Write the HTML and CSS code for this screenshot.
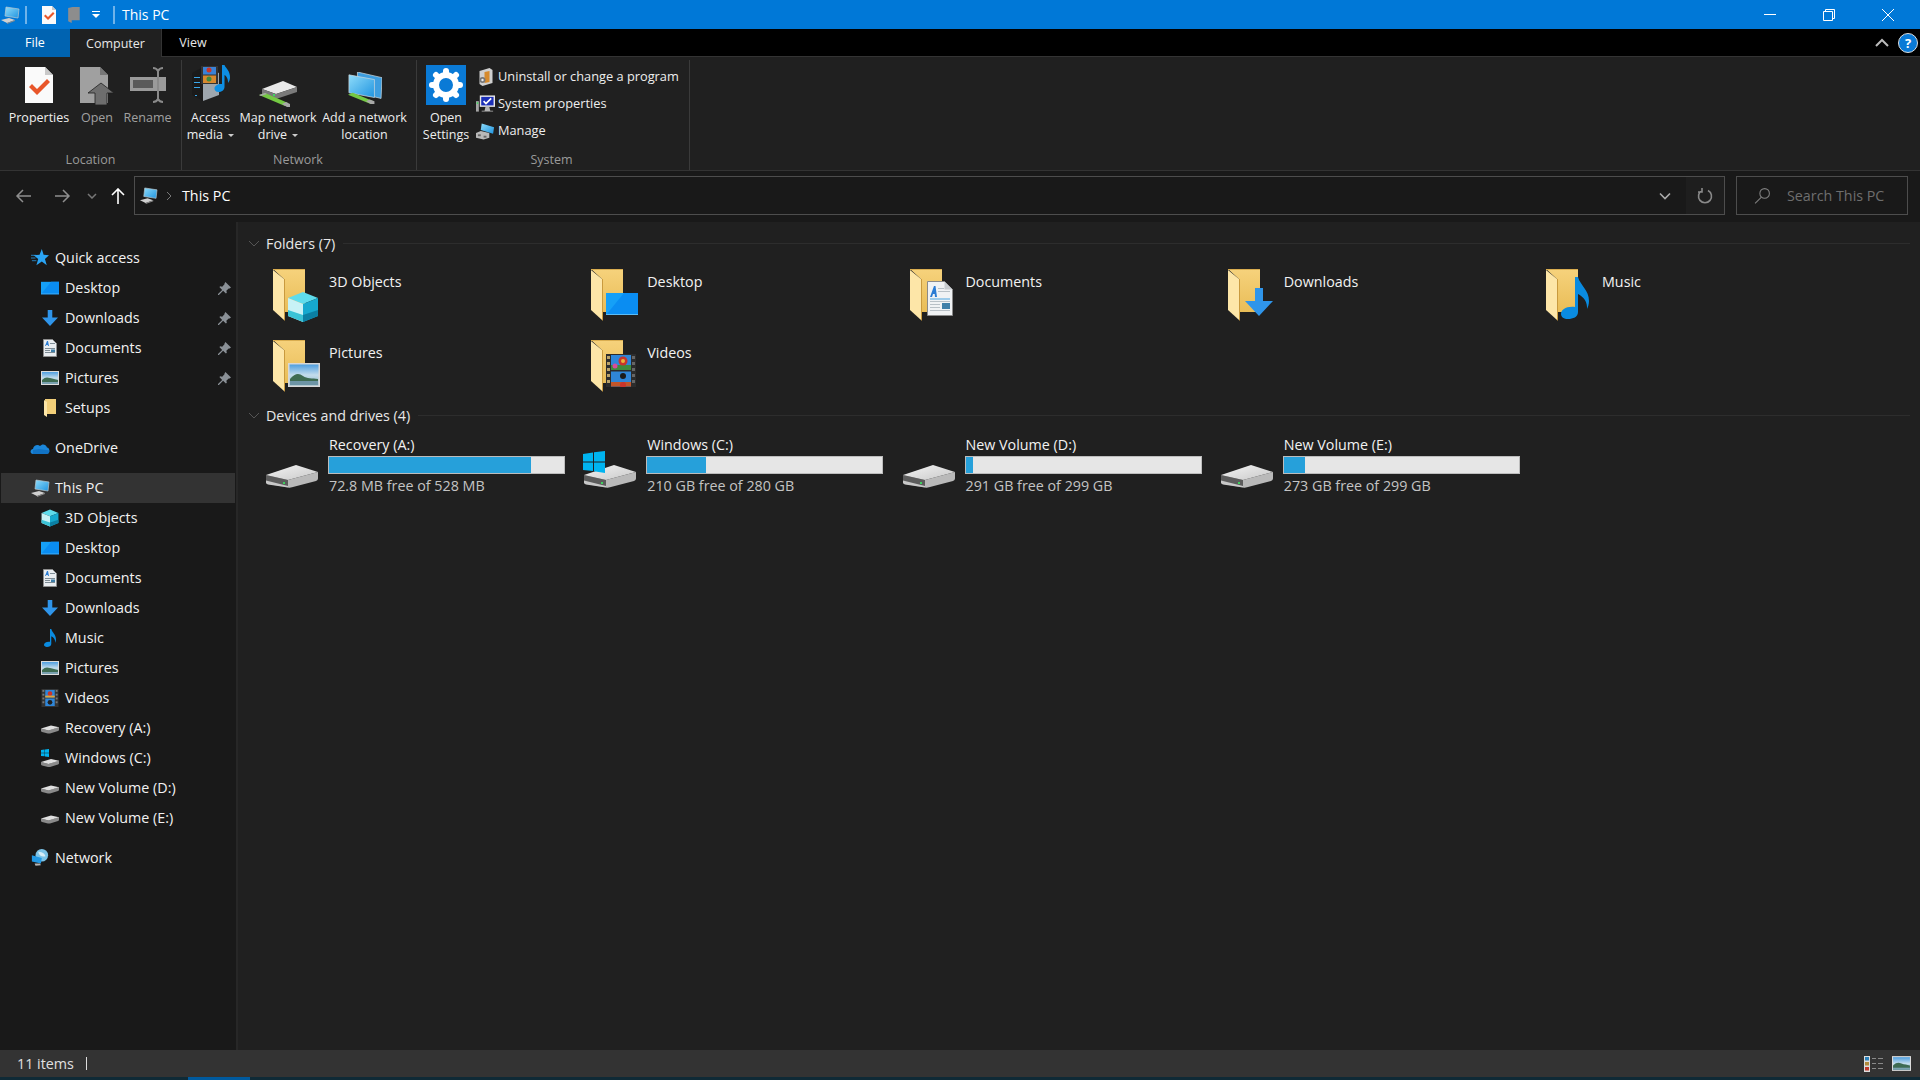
FILE: index.html
```html
<!DOCTYPE html>
<html lang="en">
<head>
<meta charset="utf-8">
<title>This PC</title>
<link rel="stylesheet" href="styles.css">
</head>
<body>
<svg class="sprite" xmlns="http://www.w3.org/2000/svg">
  <defs>
    <linearGradient id="gFolder" x1="0" y1="0" x2="0" y2="1"><stop offset="0" stop-color="#f6d27c"/><stop offset="1" stop-color="#e9bd57"/></linearGradient>
    <linearGradient id="gHdd" x1="0" y1="0" x2="1" y2="1"><stop offset="0" stop-color="#f4f4f4"/><stop offset="1" stop-color="#c8c8c8"/></linearGradient>
    <linearGradient id="gSky" x1="0" y1="0" x2="0" y2="1"><stop offset="0" stop-color="#4f9fe0"/><stop offset=".5" stop-color="#c3dcec"/><stop offset="1" stop-color="#8fb8c8"/></linearGradient>
    <linearGradient id="gScreen" x1="0" y1="0" x2="1" y2="1"><stop offset="0" stop-color="#8fdcfa"/><stop offset="1" stop-color="#1f94e0"/></linearGradient>
  </defs>

  <symbol id="folder" viewBox="0 0 52 54">
    <polygon points="1,1 33,1 33,44 12,44 12,11" fill="url(#gFolder)"/>
    <rect x="1" y="1" width="32" height="1" fill="#d9ad50"/>
    <polygon points="1,2 12,11 12,52 1,42" fill="#fde6a8"/>
    <polygon points="12,11 13,11 13,53 12,52" fill="#c99a3e"/>
  </symbol>

  <symbol id="cube" viewBox="0 0 32 32">
    <polygon points="16,1 31,7 16,13 1,7" fill="#5fdcec"/>
    <polygon points="1,7 16,13 16,31 1,25" fill="#c8f2f6"/>
    <polygon points="31,7 16,13 16,31 31,25" fill="#16a9cf"/>
    <polygon points="1,19 16,24 16,31 1,25" fill="#3bc3d6"/>
    <polygon points="31,19 16,24 16,31 31,25" fill="#0b7fa3"/>
  </symbol>
  <symbol id="desk" viewBox="0 0 32 22">
    <rect width="32" height="22" fill="#15a0f7"/>
    <polygon points="0,22 18,0 32,0 32,22" fill="#0a8df2"/>
    <rect y="21" width="32" height="1" fill="#5bbcf7"/>
  </symbol>
  <symbol id="pic" viewBox="0 0 32 24">
    <rect width="32" height="24" fill="#d8d8d8"/>
    <rect x="1.5" y="1.5" width="29" height="21" fill="url(#gSky)"/>
    <path d="M2 16c5-6 9-6 13-3s9 2 15 3v2H2z" fill="#3e6b52"/>
    <rect x="2" y="18" width="28" height="4" fill="#6d95a6"/>
  </symbol>
  <symbol id="film" viewBox="0 0 30 33">
    <rect width="30" height="33" fill="#2c2c2c"/>
    <g fill="#b9a26a"><rect x="1" y="2" width="3" height="3"/><rect x="1" y="8" width="3" height="3"/><rect x="1" y="14" width="3" height="3"/><rect x="1" y="20" width="3" height="3"/><rect x="1" y="26" width="3" height="3"/></g>
    <g fill="#666"><rect x="26" y="2" width="3" height="3"/><rect x="26" y="8" width="3" height="3"/><rect x="26" y="14" width="3" height="3"/><rect x="26" y="20" width="3" height="3"/><rect x="26" y="26" width="3" height="3"/></g>
    <rect x="5" y="1" width="20" height="15" fill="#2f86d8"/>
    <rect x="5" y="17.5" width="20" height="15" fill="#2f86d8"/>
    <rect x="5" y="11" width="20" height="5" fill="#3f8a3c"/>
    <rect x="5" y="28" width="20" height="4.5" fill="#c2562a"/>
    <circle cx="17" cy="7" r="4.5" fill="#c9352b"/><circle cx="17" cy="7" r="2" fill="#e9b53a"/>
    <circle cx="9" cy="12" r="2.5" fill="#d84a9a"/>
    <circle cx="17" cy="22" r="3" fill="#1b1b1b"/><circle cx="17" cy="31" r="3" fill="#c9352b"/>
  </symbol>
  <symbol id="doc" viewBox="0 0 26 35">
    <path d="M.5.5h17l8 8v26H.5z" fill="#f0f2f4" stroke="#8a8a8a"/>
    <path d="M17.5.5v8h8z" fill="#c8ccd0"/>
    <path d="M3 16l4-11h1.5l1.5 11h-2l-.3-3H6l-1 3z" fill="#2b7cd3"/>
    <g fill="#b8c0c6"><rect x="3" y="20" width="20" height="1"/><rect x="3" y="23" width="10" height="1"/><rect x="3" y="26" width="10" height="1"/><rect x="3" y="29" width="20" height="1"/><rect x="11" y="7" width="6" height="1"/><rect x="11" y="10" width="12" height="1"/></g>
    <rect x="3" y="17.5" width="20" height="1" fill="#4aa3df"/>
    <rect x="15" y="22" width="8" height="6" fill="#3f7fa8"/>
  </symbol>
  <symbol id="down" viewBox="0 0 28 28">
    <polygon points="10,0 18,0 18,13 28,13 14,28 0,13 10,13" fill="#2f95ea"/>
  </symbol>
  <symbol id="note" viewBox="0 0 28 42">
    <path d="M14 0h3c2 8 11 13 11 24 0 3-1 6-2 8 .5-7-3-12-9-15v18c0 5-5 7-10 7-4 0-7-2-7-5 0-4 5-8 14-7z" fill="#0a8be0"/>
  </symbol>

  <symbol id="hdd" viewBox="0 0 56 40">
    <path d="M2 26v7q0 1.500 2 2L24 38.500V31z" fill="#5c5c5c"/>
    <path d="M24 31v7.500q2 .5 4-.2L52 32q2-.8 2-2.500V23z" fill="#b9b9b9"/>
    <path d="M2 31.500 24 37v1.500L4 35.500q-2-.5-2-2z" fill="#c8c8c8"/>
    <polygon points="2,26 32,16 54,23 24,31" fill="url(#gHdd)"/>
    <rect x="19" y="33" width="2" height="2" fill="#3ecf5e"/>
  </symbol>
  <symbol id="win" viewBox="0 0 22 22">
    <polygon points="0,3 10,1.5 10,10.5 0,10.5" fill="#00b4f0"/>
    <polygon points="11,1.3 22,0 22,10.5 11,10.5" fill="#00b4f0"/>
    <polygon points="0,11.5 10,11.5 10,20 0,19" fill="#00b4f0"/>
    <polygon points="11,11.5 22,11.5 22,22 11,20.3" fill="#00b4f0"/>
  </symbol>

  <symbol id="pc" viewBox="0 0 20 18">
    <polygon points="6,1 19,3 18,12 5,10" fill="url(#gScreen)" stroke="#b9c7cf" stroke-width=".7"/>
    <polygon points="1,14 9,12 15,14 7,17" fill="#d0d0d0"/>
    <polygon points="7,17 15,14 15,15 7,18" fill="#8a8a8a"/>
  </symbol>
  <symbol id="s-doc" viewBox="0 0 18 18">
    <path d="M2.5.5h9l4 4v13h-13z" fill="#e9edf0" stroke="#8e8e8e"/>
    <path d="M4 7l2-5h1l1 5H7l-.2-1H5.3L5 7z" fill="#2b7cd3"/>
    <g fill="#7d8b94"><rect x="4" y="9" width="10" height="1"/><rect x="4" y="11" width="5" height="1"/><rect x="4" y="13" width="10" height="1"/><rect x="9" y="4" width="5" height="1"/></g>
    <rect x="10" y="10.5" width="4" height="2.5" fill="#3f7fa8"/>
  </symbol>
  <symbol id="s-pic" viewBox="0 0 18 14">
    <rect width="18" height="14" fill="#dcdcdc"/>
    <rect x="1" y="1" width="16" height="12" fill="url(#gSky)"/>
    <path d="M1 9c3-3 5-3 8-2s5 1 8 2v4H1z" fill="#3e6b52"/>
    <rect x="1" y="11" width="16" height="2" fill="#7aa1b0"/>
  </symbol>
  <symbol id="s-film" viewBox="0 0 18 19">
    <rect width="18" height="19" fill="#333"/>
    <g fill="#777"><rect x="1" y="1" width="2" height="2"/><rect x="1" y="5" width="2" height="2"/><rect x="1" y="9" width="2" height="2"/><rect x="1" y="13" width="2" height="2"/><rect x="15" y="1" width="2" height="2"/><rect x="15" y="5" width="2" height="2"/><rect x="15" y="9" width="2" height="2"/><rect x="15" y="13" width="2" height="2"/></g>
    <rect x="4" y="1" width="10" height="8" fill="#2f86d8"/><rect x="4" y="10" width="10" height="8" fill="#2f86d8"/>
    <circle cx="9" cy="5" r="2.5" fill="#c9352b"/><circle cx="9" cy="14" r="2.5" fill="#1f1f1f"/><rect x="4" y="7" width="10" height="2" fill="#e1a53a"/>
  </symbol>
  <symbol id="s-hdd" viewBox="0 0 18 11">
    <path d="M0 6v2.500q0 .6 1 1l6 1.500q1 .2 2 0l8-2.500q1-.3 1-1V4.500L7.500 8z" fill="#8a8a8a"/>
    <polygon points="0,6 10,3 18,4.7 7.500,8" fill="#e0e0e0"/>
  </symbol>
  <symbol id="s-folder" viewBox="0 0 14 18">
    <polygon points="2,0 13,0 13,15 4,15 2,1" fill="#f2cf79"/>
    <polygon points="1,1 4,3 4,18 1,16" fill="#fde6a8"/>
  </symbol>
  <symbol id="star" viewBox="0 0 20 20">
    <polygon points="12,0 14,6.5 20,7 15.5,11 17.5,18 12,14 6,18 8,11 3,7 9.5,6.5" fill="#2aa4f4"/>
    <g stroke="#2aa4f4" stroke-width=".8"><line x1="0" y1="7" x2="6" y2="7"/><line x1="0" y1="10" x2="5" y2="10"/><line x1="1" y1="13" x2="6" y2="13"/></g>
  </symbol>
  <symbol id="cloud" viewBox="0 0 20 14">
    <path d="M3 13C0 13-.5 8.500 3 8c.5-4 5-5 7-3 2-2.500 6-2 7 1.500 3 0 3.500 6.500-.5 6.500z" fill="#1b86d9"/>
    <path d="M3 13h14c2 0 2.500-2 2.500-3.500L9 8 3 9z" fill="#0f6cbd" opacity=".75"/>
  </symbol>
  <symbol id="net" viewBox="0 0 20 20">
    <circle cx="12" cy="7" r="7" fill="#7cc4e8"/>
    <path d="M8 3c3 0 7 1 8 5-3 1-7 0-8-5z" fill="#d7eef8"/>
    <polygon points="1,7 12,10 11,16 1,14" fill="#2299e4"/>
    <polygon points="4,16 10,16 11,18 5,18.5" fill="#b5b5b5"/>
  </symbol>
  <symbol id="pin" viewBox="0 0 14 14">
    <path d="M8 0l6 6-1.500 1-1 0-2.500 2.500.5 2-1 1-3-3L1 14l-1 0 0-1 4.500-4.500-3-3 1-1 2 .5L7 2.500V1.500z" fill="#8a9096"/>
  </symbol>

  <symbol id="r-prop" viewBox="0 0 28 36">
    <path d="M0 0h20l8 8v28H0z" fill="#fafafa"/>
    <path d="M20 0l8 8h-8z" fill="#c9c9c9"/>
    <path d="M4 20l3-3 5 5 10-10 3 3-13 13z" fill="#e8562a"/>
  </symbol>
  <symbol id="r-open" viewBox="0 0 34 38">
    <path d="M0 0h20l8 8v28H0z" fill="#a0a0a0"/>
    <path d="M20 0l8 8h-8z" fill="#777"/>
    <path d="M8 26L21 16l13 10h-7v12H15V26z" fill="#6e6e6e" stroke="#202020" stroke-width=".8"/>
  </symbol>
  <symbol id="r-rename" viewBox="0 0 36 36">
    <rect y="10" width="36" height="14" fill="#9a9a9a"/>
    <rect x="3" y="13" width="20" height="8" fill="#5a5a5a"/>
    <path d="M23 1c3 0 4 1 5 3 1-2 2-3 5-3M23 35c3 0 4-1 5-3 1 2 2 3 5 3M28 4v28" stroke="#8a8a8a" stroke-width="2" fill="none"/>
  </symbol>
  <symbol id="r-media" viewBox="0 0 40 38">
    <polygon points="1,8 12,2 12,36 1,30" fill="#1a1a1a"/>
    <polygon points="12,2 28,8 28,30 12,36" fill="#9ea6ad"/>
    <g fill="#39a7ea"><rect x="3" y="12" width="6" height="1"/><rect x="3" y="17" width="6" height="1"/><rect x="3" y="22" width="6" height="1"/><rect x="4" y="30" width="2" height="1"/></g>
    <rect x="10" y="1" width="17" height="18" fill="#333"/>
    <rect x="12" y="2" width="13" height="7.5" fill="#3a82d6"/><rect x="12" y="10.5" width="13" height="7.5" fill="#d8892e"/>
    <circle cx="18" cy="5" r="2.5" fill="#c9352b"/><circle cx="18" cy="14" r="2.5" fill="#3f8a3c"/>
    <path d="M31 0h2.500c1 3 6 6 5.500 13-.2 2-1 4-2 5 .3-4-1.500-7-3.500-8v12c0 3-3 5-6 5s-4-2-4-3.500c0-3 4-5 7.500-4.500z" fill="#0e8fe3"/>
  </symbol>
  <symbol id="r-map" viewBox="0 0 40 30">
    <polygon points="4,11 25,3 39,9 18,16" fill="#e8e8e8"/>
    <path d="M4 11v5l14 5 21-7V9l-21 7z" fill="#7a7a7a"/>
    <rect x="15" y="16" width="2" height="2" fill="#42d264"/>
    <path d="M1 17l6-2 23 10-3 3z" fill="#74c943"/>
    <path d="M1 17l6-2 2 1-6 2zM24 26l4-2 4 2v3h-3z" fill="#a8a8a8"/>
  </symbol>
  <symbol id="r-add" viewBox="0 0 36 36">
    <polygon points="10,0 36,6 35,28 10,22" fill="#3d9ee0" stroke="#c5d5dc" stroke-width=".8"/>
    <polygon points="1,3 28,8 28,27 1,22" fill="url(#gScreen)" stroke="#c5d5dc" stroke-width=".8"/>
    <path d="M0 24l5-2 22 9-3 3z" fill="#74c943"/>
    <path d="M19 31l4-2 5 2v3h-4z" fill="#a8a8a8"/>
  </symbol>
  <symbol id="r-gear" viewBox="0 0 40 40">
    <rect width="40" height="40" fill="#0a7ad6"/>
    <circle cx="20" cy="20" r="10" fill="none" stroke="#fff" stroke-width="6"/>
    <g stroke="#fff" stroke-width="6" stroke-linecap="round"><line x1="20" y1="6" x2="20" y2="9"/><line x1="20" y1="31" x2="20" y2="34"/><line x1="6" y1="20" x2="9" y2="20"/><line x1="31" y1="20" x2="34" y2="20"/><line x1="10" y1="10" x2="12" y2="12"/><line x1="28" y1="28" x2="30" y2="30"/><line x1="30" y1="10" x2="28" y2="12"/><line x1="12" y1="28" x2="10" y2="30"/></g>
  </symbol>
  <symbol id="r-uninst" viewBox="0 0 18 18">
    <polygon points="3,3 13,0 16,2 16,15 6,18 3,16" fill="#cfcfcf"/>
    <polygon points="8,4 13,3 13,14 8,15" fill="#d68a2c"/>
    <circle cx="6" cy="12" r="3" fill="#777"/><circle cx="6" cy="12" r="1.2" fill="#eee"/>
  </symbol>
  <symbol id="r-sys" viewBox="0 0 20 18">
    <rect x="4" y="0" width="16" height="12" fill="#e8e8e8"/>
    <rect x="5.5" y="1.5" width="13" height="9" fill="#1b2fb8"/>
    <path d="M8 6l2.500 2.500L16 3" stroke="#fff" stroke-width="1.8" fill="none"/>
    <path d="M10 12h4l1 4h3v1H6v-1h3z" fill="#b5b5b5"/>
    <rect x="0" y="6" width="3" height="11" fill="#a5a5a5"/><rect x=".8" y="7" width="1.5" height="2" fill="#45d664"/>
  </symbol>
  <symbol id="r-manage" viewBox="0 0 20 18">
    <polygon points="6,1 19,5 18,12 5,8" fill="url(#gScreen)"/>
    <polygon points="0,11 5,9 14,11 14,16 8,18 0,16" fill="#b9b9b9"/>
    <rect x="2" y="12.5" width="3" height="2" fill="#666"/>
    <rect x="8" y="14" width="3" height="2" fill="#666"/>
  </symbol>
</svg>

<header class="titlebar">
  <svg class="tb-pc"><use href="#pc"/></svg>
  <i class="tb-sep"></i>
  <svg class="tb-check" viewBox="0 0 28 36"><use href="#r-prop" width="28" height="36"/></svg>
  <svg class="tb-fold" viewBox="0 0 14 18"><polygon points="1,1 6,0 14,0 14,15 5,15 5,18 1,16" fill="#8d8d8d"/></svg>
  <svg class="tb-more" viewBox="0 0 10 10"><rect x="1" y="1" width="8" height="1" fill="#fff"/><polygon points="1,4 9,4 5,8" fill="#fff"/></svg>
  <i class="tb-sep tb-sep2"></i>
  <span class="tb-title">This PC</span>
  <div class="win-ctrl">
    <svg viewBox="0 0 14 14"><rect x="1" y="6" width="12" height="1" fill="#fff"/></svg>
    <svg viewBox="0 0 14 14"><path d="M3.5 3.5V1.5h9v9h-2M1.5 3.5h9v9h-9z" fill="none" stroke="#fff"/></svg>
    <svg viewBox="0 0 14 14"><path d="M1 1l12 12M13 1L1 13" stroke="#fff" fill="none"/></svg>
  </div>
</header>

<nav class="tabs">
  <span class="tab tab-file">File</span>
  <span class="tab tab-active">Computer</span>
  <span class="tab tab-view">View</span>
  <svg class="tab-collapse" viewBox="0 0 14 9"><path d="M1 8l6-6 6 6" fill="none" stroke="#bbb" stroke-width="2"/></svg>
  <span class="help">?</span>
</nav>

<section class="ribbon">
  <div class="rgroup rg-location">
    <div class="rbody">
      <div class="rbtn w-prop"><svg class="ri ri-prop"><use href="#r-prop"/></svg><span>Properties</span></div>
      <div class="rbtn w-open dim"><svg class="ri ri-open"><use href="#r-open"/></svg><span>Open</span></div>
      <div class="rbtn w-ren dim"><svg class="ri ri-ren"><use href="#r-rename"/></svg><span>Rename</span></div>
    </div>
    <div class="rlabel">Location</div>
  </div>
  <div class="rgroup rg-network">
    <div class="rbody">
      <div class="rbtn w-media"><svg class="ri ri-media"><use href="#r-media"/></svg><span>Access<br>media <b class="caret"></b></span></div>
      <div class="rbtn w-map"><svg class="ri ri-map"><use href="#r-map"/></svg><span>Map network<br>drive <b class="caret"></b></span></div>
      <div class="rbtn w-add"><svg class="ri ri-add"><use href="#r-add"/></svg><span>Add a network<br>location</span></div>
    </div>
    <div class="rlabel rl-net">Network</div>
  </div>
  <div class="rgroup rg-system">
    <div class="rbody">
      <div class="rbtn w-set"><svg class="ri ri-gear"><use href="#r-gear"/></svg><span>Open<br>Settings</span></div>
      <div class="rlist">
        <div class="rrow"><svg><use href="#r-uninst"/></svg>Uninstall or change a program</div>
        <div class="rrow"><svg><use href="#r-sys"/></svg>System properties</div>
        <div class="rrow"><svg><use href="#r-manage"/></svg>Manage</div>
      </div>
    </div>
    <div class="rlabel rl-sys">System</div>
  </div>
</section>

<section class="navbar">
  <div class="nav-btns">
    <svg class="nb nb-back" viewBox="0 0 16 14"><path d="M8 1L2 7l6 6M2 7h14" fill="none" stroke="#8e8e8e" stroke-width="1.5"/></svg>
    <svg class="nb nb-fwd" viewBox="0 0 16 14"><path d="M8 1l6 6-6 6M14 7H0" fill="none" stroke="#8e8e8e" stroke-width="1.5"/></svg>
    <svg class="nb nb-drop" viewBox="0 0 10 6"><path d="M1 1l4 4 4-4" fill="none" stroke="#777" stroke-width="1.5"/></svg>
    <svg class="nb nb-up" viewBox="0 0 14 16"><path d="M1 7l6-6 6 6M7 1v15" fill="none" stroke="#fff" stroke-width="1.6"/></svg>
  </div>
  <div class="address">
    <svg class="addr-pc"><use href="#pc"/></svg>
    <svg class="addr-sep" viewBox="0 0 6 10"><path d="M1 1l4 4-4 4" fill="none" stroke="#777"/></svg>
    <span class="addr-text">This PC</span>
    <svg class="addr-drop" viewBox="0 0 12 8"><path d="M1 1.500l5 5 5-5" fill="none" stroke="#aaa" stroke-width="1.6"/></svg>
    <div class="addr-ref"><svg viewBox="0 0 16 16"><path d="M5 2.500A6.500 6.500 0 1 0 11 2.500M5 0v4H1" fill="none" stroke="#8a8a8a" stroke-width="1.6"/></svg></div>
  </div>
  <div class="search">
    <svg viewBox="0 0 16 16"><circle cx="10" cy="6" r="4.500" fill="none" stroke="#808080"/><path d="M7 9.500L1 15.500" stroke="#808080"/></svg>
    <span>Search This PC</span>
  </div>
</section>

<div class="body-row">
  <aside class="sidebar">
    <div class="sgroup">
      <div class="srow l1"><svg><use href="#star"/></svg>Quick access</div>
      <div class="srow l2 pinned"><svg><use href="#desk"/></svg>Desktop<svg class="pin"><use href="#pin"/></svg></div>
      <div class="srow l2 pinned"><svg class="i-down"><use href="#down"/></svg>Downloads<svg class="pin"><use href="#pin"/></svg></div>
      <div class="srow l2 pinned"><svg><use href="#s-doc"/></svg>Documents<svg class="pin"><use href="#pin"/></svg></div>
      <div class="srow l2 pinned"><svg><use href="#s-pic"/></svg>Pictures<svg class="pin"><use href="#pin"/></svg></div>
      <div class="srow l2"><svg><use href="#s-folder"/></svg>Setups</div>
    </div>
    <div class="sgroup">
      <div class="srow l1"><svg><use href="#cloud"/></svg>OneDrive</div>
    </div>
    <div class="sgroup">
      <div class="srow l1 selected"><svg><use href="#pc"/></svg>This PC</div>
      <div class="srow l2"><svg><use href="#cube"/></svg>3D Objects</div>
      <div class="srow l2"><svg><use href="#desk"/></svg>Desktop</div>
      <div class="srow l2"><svg><use href="#s-doc"/></svg>Documents</div>
      <div class="srow l2"><svg class="i-down"><use href="#down"/></svg>Downloads</div>
      <div class="srow l2"><svg><use href="#note"/></svg>Music</div>
      <div class="srow l2"><svg><use href="#s-pic"/></svg>Pictures</div>
      <div class="srow l2"><svg><use href="#s-film"/></svg>Videos</div>
      <div class="srow l2"><svg><use href="#s-hdd"/></svg>Recovery (A:)</div>
      <div class="srow l2 has-win"><svg viewBox="0 0 18 18"><use href="#win" width="8" height="8"/><use href="#s-hdd" y="7" width="18" height="11"/></svg>Windows (C:)</div>
      <div class="srow l2"><svg><use href="#s-hdd"/></svg>New Volume (D:)</div>
      <div class="srow l2"><svg><use href="#s-hdd"/></svg>New Volume (E:)</div>
    </div>
    <div class="sgroup">
      <div class="srow l1"><svg><use href="#net"/></svg>Network</div>
    </div>
  </aside>

  <main class="content">
    <div class="ghead">
      <svg viewBox="0 0 12 7"><path d="M1 1l5 5 5-5" fill="none" stroke="#555"/></svg>
      <span>Folders (7)</span><i></i>
    </div>
    <div class="fgrid">
      <div class="fitem"><svg class="fic" viewBox="0 0 52 54"><use href="#folder" width="52" height="54"/><use href="#cube" x="15" y="23" width="32" height="32"/></svg><span>3D Objects</span></div>
      <div class="fitem"><svg class="fic" viewBox="0 0 52 54"><use href="#folder" width="52" height="54"/><use href="#desk" x="16" y="25" width="32" height="22"/></svg><span>Desktop</span></div>
      <div class="fitem"><svg class="fic" viewBox="0 0 52 54"><use href="#folder" width="52" height="54"/><use href="#doc" x="18" y="13" width="26" height="35"/></svg><span>Documents</span></div>
      <div class="fitem"><svg class="fic" viewBox="0 0 52 54"><use href="#folder" width="52" height="54"/><use href="#down" x="18" y="20" width="28" height="28"/></svg><span>Downloads</span></div>
      <div class="fitem"><svg class="fic" viewBox="0 0 52 54"><use href="#folder" width="52" height="54"/><use href="#note" x="16" y="9" width="28" height="42"/></svg><span>Music</span></div>
      <div class="fitem"><svg class="fic" viewBox="0 0 52 54"><use href="#folder" width="52" height="54"/><use href="#pic" x="16" y="24" width="32" height="24"/></svg><span>Pictures</span></div>
      <div class="fitem"><svg class="fic" viewBox="0 0 52 54"><use href="#folder" width="52" height="54"/><use href="#film" x="16" y="15" width="30" height="33"/></svg><span>Videos</span></div>
    </div>
    <div class="ghead ghead2">
      <svg viewBox="0 0 12 7"><path d="M1 1l5 5 5-5" fill="none" stroke="#555"/></svg>
      <span>Devices and drives (4)</span><i></i>
    </div>
    <div class="dgrid">
      <div class="ditem"><svg class="dic" viewBox="0 0 56 40"><use href="#hdd" width="56" height="40"/></svg>
        <div class="dinfo"><div class="dname">Recovery (A:)</div><div class="bar"><div class="fill" style="width:86%"></div></div><div class="dfree">72.8 MB free of 528 MB</div></div></div>
      <div class="ditem"><svg class="dic" viewBox="0 0 56 40"><use href="#hdd" width="56" height="40"/><use href="#win" x="1" y="2" width="22" height="22"/></svg>
        <div class="dinfo"><div class="dname">Windows (C:)</div><div class="bar"><div class="fill" style="width:25%"></div></div><div class="dfree">210 GB free of 280 GB</div></div></div>
      <div class="ditem"><svg class="dic" viewBox="0 0 56 40"><use href="#hdd" width="56" height="40"/></svg>
        <div class="dinfo"><div class="dname">New Volume (D:)</div><div class="bar"><div class="fill" style="width:3%"></div></div><div class="dfree">291 GB free of 299 GB</div></div></div>
      <div class="ditem"><svg class="dic" viewBox="0 0 56 40"><use href="#hdd" width="56" height="40"/></svg>
        <div class="dinfo"><div class="dname">New Volume (E:)</div><div class="bar"><div class="fill" style="width:9%"></div></div><div class="dfree">273 GB free of 299 GB</div></div></div>
    </div>
  </main>
</div>

<footer class="status">
  <span class="st-count">11 items</span><i class="st-sep"></i>
  <div class="st-views">
    <svg class="v-details" viewBox="0 0 19 16">
      <rect width="6" height="16" fill="#ddd"/><rect x="1" y="1" width="4" height="3.5" fill="#2a80b9"/><rect x="1" y="6" width="4" height="3.5" fill="#b08a3a"/><rect x="1" y="11" width="4" height="3.5" fill="#c0392b"/>
      <g fill="#8a8a8a"><rect x="8" y="2" width="4" height="1"/><rect x="14" y="2" width="5" height="1"/><rect x="8" y="7" width="4" height="1"/><rect x="14" y="7" width="5" height="1"/><rect x="8" y="12" width="4" height="1"/><rect x="14" y="12" width="5" height="1"/></g>
    </svg>
    <svg class="v-large" viewBox="0 0 18 14"><use href="#s-pic" width="18" height="14"/></svg>
  </div>
</footer>
<div class="taskstrip"><i></i></div>
</body>
</html>
```
FILE: styles.css
```css
* { box-sizing: border-box; }
html, body { margin: 0; height: 100%; }
body {
  width: 1920px; height: 1080px; overflow: hidden;
  display: flex; flex-direction: column;
  background: #202020; color: #fff;
  font: 14.3px/20px "Open Sans", "Liberation Sans", sans-serif;
}
i { display: block; font-style: normal; }
svg { display: block; flex: none; }
.sprite { width: 0; height: 0; overflow: hidden; }

/* title bar */
.titlebar { height: 29px; flex: none; background: #0078d7; display: flex; align-items: center; }
.tb-pc { width: 20px; height: 18px; }
.tb-sep { width: 2px; height: 18px; background: #6fb3ea; margin-left: 5px; }
.tb-check { width: 14px; height: 18px; margin-left: 15px; }
.tb-fold { width: 13px; height: 16px; margin-left: 11px; }
.tb-more { width: 10px; height: 10px; margin-left: 11px; }
.tb-sep2 { margin-left: 12px; }
.tb-title { margin-left: 7px; font-size: 14px; }
.win-ctrl { margin-left: auto; display: flex; gap: 45px; padding-right: 25px; }
.win-ctrl svg { width: 14px; height: 14px; }

/* tabs */
.tabs { height: 28px; flex: none; background: #000; border-bottom: 1px solid #333; display: flex; align-items: center; font-size: 12.5px; }
.tab { height: 28px; display: flex; align-items: center; justify-content: center; color: #e8e8e8; }
.tab-file { width: 70px; background: #0063b1; color: #fff; }
.tab-active { width: 92px; background: #202020; height: 29px; align-self: flex-start; border-right: 1px solid #333; }
.tab-view { width: 62px; }
.tab-collapse { width: 14px; height: 9px; margin-left: auto; }
.help { width: 20px; height: 20px; margin: 0 2px 0 9px; border-radius: 50%; background: #0a7ad6; border: 1px solid #ddd; color: #fff; font-size: 13px; font-weight: 700; line-height: 18px; text-align: center; }

/* ribbon */
.ribbon { height: 114px; flex: none; background: #202020; border-bottom: 1px solid #333; display: flex; font-size: 12.5px; line-height: 17px; }
.rgroup { display: flex; flex-direction: column; border-right: 1px solid #3a3a3a; margin-top: 3px; }
.rg-location { width: 182px; }
.rg-network { width: 235px; }
.rg-system { width: 273px; }
.rbody { height: 90px; display: flex; }
.rlabel { text-align: center; color: #9a9a9a; height: 20px; line-height: 20px; }
.rl-net { padding-right: 2px; }
.rl-sys { padding-right: 3px; }
.rbtn { display: flex; flex-direction: column; align-items: center; text-align: center; color: #eee; flex: none; white-space: nowrap; }
.rbtn.dim { color: #a0a0a0; }
.rbtn .ri { flex: none; }
.rbtn span { display: block; }
.w-prop { width: 78px; } .w-open { width: 38px; } .w-ren { width: 63px; }
.w-media { width: 57px; } .w-map { width: 78px; } .w-add { width: 95px; }
.w-set { width: 58px; }
.ri-prop { width: 28px; height: 36px; margin: 7px 0 6px; }
.ri-open { width: 34px; height: 38px; margin: 7px 0 4px; }
.ri-ren { width: 36px; height: 36px; margin: 7px 0 6px; }
.ri-media { width: 40px; height: 38px; margin: 5px 0 6px; }
.ri-map { width: 40px; height: 30px; margin: 18px 0 1px; }
.ri-add { width: 34px; height: 34px; margin: 12px 0 3px; }
.ri-gear { width: 40px; height: 40px; margin: 5px 0 4px; }
.caret { display: inline-block; width: 0; height: 0; border: 3.5px solid transparent; border-top-color: #ccc; border-bottom: 0; vertical-align: 2px; margin-left: 2px; }
.rlist { display: flex; flex-direction: column; margin-top: 3px; padding-left: 1px; color: #eee; font-size: 12.8px; }
.rrow { height: 27px; display: flex; align-items: center; gap: 3px; white-space: nowrap; }
.rrow svg { width: 19px; height: 18px; }

/* navbar */
.navbar { height: 51px; flex: none; background: #191919; display: flex; padding: 5px 12px 0 0; align-items: flex-start; }
.nav-btns { width: 134px; height: 39px; display: flex; align-items: center; flex: none; padding-left: 15px; }
.nb-back { width: 16px; height: 14px; }
.nb-fwd { width: 16px; height: 14px; margin-left: 24px; }
.nb-drop { width: 10px; height: 6px; margin-left: 16px; }
.nb-up { width: 14px; height: 16px; margin-left: 14px; }
.address { flex: 1; height: 39px; border: 1px solid #4d4d4d; display: flex; align-items: center; padding-left: 4px; }
.addr-pc { width: 19px; height: 17px; }
.addr-sep { width: 6px; height: 10px; margin-left: 8px; }
.addr-text { margin-left: 10px; }
.addr-drop { width: 12px; height: 8px; margin-left: auto; margin-right: 15px; }
.addr-ref { width: 38px; height: 37px; background: #1e1e1e; display: flex; align-items: center; justify-content: center; }
.addr-ref svg { width: 16px; height: 16px; }
.search { width: 172px; height: 39px; margin-left: 11px; border: 1px solid #4d4d4d; display: flex; align-items: center; padding-left: 17px; color: #6e6e6e; }
.search svg { width: 17px; height: 17px; }
.search span { margin-left: 16px; white-space: nowrap; }

/* body */
.body-row { flex: 1; min-height: 0; display: flex; }
.sidebar { width: 238px; flex: none; background: #191919; border-right: 2px solid #272727; padding-top: 21px; }
.sgroup { margin-bottom: 10px; }
.srow { height: 30px; display: flex; align-items: center; color: #f2f2f2; white-space: nowrap; }
.srow svg { width: 18px; height: 18px; }
.l1 { padding-left: 31px; margin-left: 1px; margin-right: 1px; }
.l1 svg { width: 20px; height: 18px; margin-left: -2px; margin-right: 5px; }
.l2 { padding-left: 41px; }
.l2 svg { margin-right: 6px; }
.selected { background: #333; }
.srow .i-down { padding: 1px; }
.srow .pin { width: 13px; height: 13px; margin: 0 0 0 auto; }
.pinned { padding-right: 5px; }

/* content */
.content { flex: 1; min-width: 0; padding: 11px 10px 0 26px; }
.ghead { height: 20px; margin-left: -16px; display: flex; align-items: center; color: #e8e8e8; }
.ghead svg { width: 12px; height: 7px; margin-right: 6px; }
.ghead span { white-space: nowrap; padding-top: 2px; }
.ghead i { flex: 1; height: 1px; background: #2d2d2d; margin-left: 8px; }
.ghead2 { margin-top: 1px; }
.fgrid { display: grid; grid-template-columns: repeat(5, 318.25px); grid-auto-rows: 71px; margin-top: 9px; }
.fitem { display: flex; padding: 6px 0 0 8px; }
.fic { width: 52px; height: 54px; }
.fitem span { margin: 4px 0 0 5px; color: #f2f2f2; }
.dgrid { display: grid; grid-template-columns: repeat(5, 318.25px); margin-top: 9px; }
.ditem { display: flex; }
.dic { width: 56px; height: 40px; margin: 15px 8px 0 0; }
.dinfo { width: 237px; }
.dname { height: 22px; line-height: 22px; padding-left: 1px; color: #f2f2f2; }
.bar { height: 18px; background: #e6e6e6; border: 1px solid #bcbcbc; }
.fill { height: 100%; background: #26a0da; }
.dfree { height: 21px; line-height: 23px; padding-left: 1px; color: #c4c4c4; }

/* status */
.status { height: 27px; flex: none; background: #333; display: flex; align-items: center; padding-left: 17px; color: #e0e0e0; }
.st-sep { width: 1px; height: 13px; background: #ddd; margin-left: 12px; }
.st-views { margin-left: auto; display: flex; align-items: center; padding-right: 9px; }
.v-details { width: 19px; height: 16px; }
.v-large { width: 19px; height: 15px; margin-left: 9px; }
.taskstrip { height: 3px; flex: none; background: #0f2a36; padding-left: 188px; }
.taskstrip i { width: 62px; height: 3px; background: #005a9e; }
```
